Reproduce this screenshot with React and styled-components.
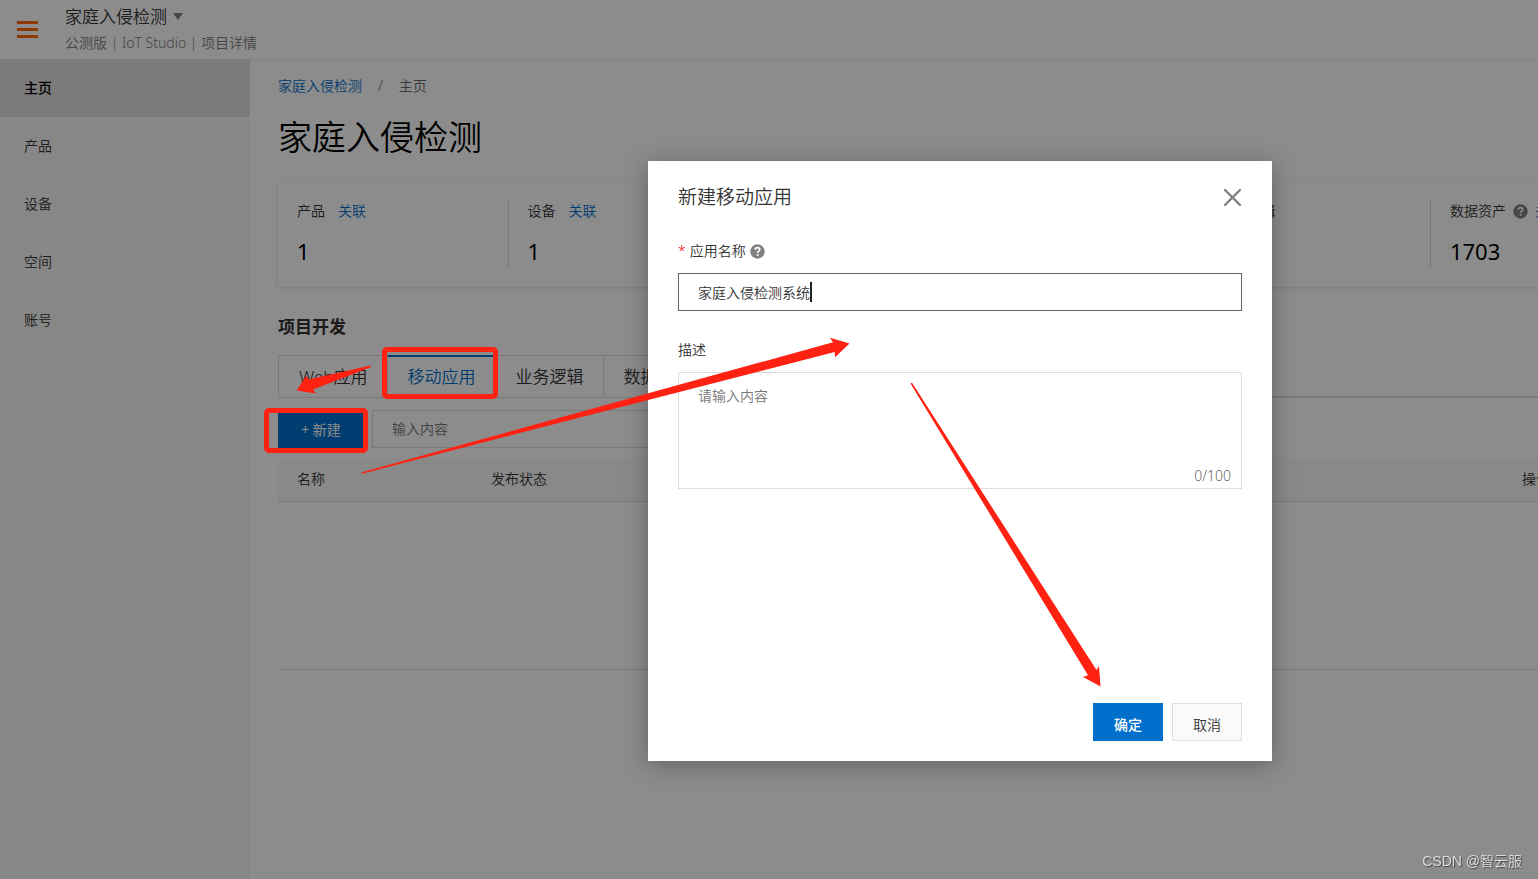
// App.jsx
import React, { useState } from 'react';
import styled, { createGlobalStyle } from 'styled-components';

const GlobalStyle = createGlobalStyle`
  * {
    box-sizing: border-box;
  }

  body {
    margin: 0;
    overflow: hidden;
    background-color: #FFF;
  }

  body, button, input, textarea {
    font-family: "Noto Sans", "Noto Sans CJK SC", sans-serif;
    font-size: 14px;
    font-weight: 350;
    color: #333;
  }
`;

const Page = styled.div`
  position: relative;
  display: flex;
  flex-direction: column;
  min-width: 1920px;
  min-height: 100vh;
`;

const Header = styled.header`
  display: flex;
  align-items: center;
  gap: 27px;
  height: 59px;
  padding-left: 17px;
  box-shadow: 0 1px 4px rgba(0, 0, 0, 0.08);
`;

const MenuButton = styled.button`
  display: flex;
  flex-direction: column;
  gap: 4px;
  width: 21px;
  padding: 0;
  border: none;
  background: none;
  cursor: pointer;
`;

const MenuLine = styled.span`
  height: 3px;
  background-color: #FF6A00;
`;

const ProjectName = styled.button`
  display: flex;
  align-items: center;
  gap: 6px;
  padding: 0;
  border: none;
  background: none;
  font-size: 17px;
  line-height: 26px;
  cursor: pointer;
`;

const ProjectInfo = styled.div`
  line-height: 26px;
  color: #808080;
`;

const Body = styled.div`
  display: flex;
  flex: 1;
`;

const Sidebar = styled.nav`
  display: flex;
  flex-direction: column;
  width: 250px;
  background-color: #F6F6F6;
`;

const SidebarLink = styled.a`
  height: 58px;
  padding-left: 24px;
  line-height: 58px;
  text-decoration: none;
  color: ${(p) => (p.$active ? '#000' : '#333')};
  font-weight: ${(p) => (p.$active ? 500 : 350)};
  background-color: ${(p) => (p.$active ? '#E1E1E1' : 'transparent')};
`;

const Content = styled.main`
  flex: 1;
  padding: 15px 28px 0;
`;

const Breadcrumb = styled.div`
  display: flex;
  gap: 16px;
  line-height: 24px;
  color: #666;
`;

const Link = styled.a`
  color: #0070CC;
  text-decoration: none;
`;

const Title = styled.h1`
  margin: 15px 0 19px;
  font-size: 34px;
  font-weight: 350;
  line-height: 48px;
  color: #000;
`;

const Stats = styled.section`
  display: flex;
  padding: 20px 0;
  box-shadow: 0 1px 4px rgba(0, 0, 0, 0.12);
`;

const Stat = styled.div`
  flex: 1;
  padding-left: 19px;
  border-right: 1px solid ${(p) => (p.$last ? 'transparent' : '#DDD')};
`;

const StatLabel = styled.div`
  display: flex;
  align-items: center;
  gap: ${(p) => (p.$help ? '7px' : '13px')};
  line-height: 22px;
`;

const StatValue = styled.div`
  height: 31px;
  margin-top: 14px;
  font-size: 22px;
  font-weight: 400;
  line-height: 31px;
  color: #000;
`;

const SectionTitle = styled.h2`
  margin: 28px 0 16px;
  font-size: 17px;
  font-weight: 700;
  line-height: 24px;
`;

const Tabs = styled.div`
  display: flex;
  height: 43px;
`;

const Tab = styled.button`
  padding: 0 19px 2px 20px;
  border: 1px solid #DDD;
  border-right-width: 0;
  box-shadow: ${(p) => (p.$active ? 'inset 0 1px #0070CC' : 'none')};
  border-top-color: ${(p) => (p.$active ? '#0070CC' : '#DDD')};
  background: none;
  font-size: 17px;
  color: ${(p) => (p.$active ? '#0070CC' : '#333')};
  cursor: pointer;
`;

const TabsRail = styled.div`
  flex: 1;
  border-left: 1px solid #DDD;
  border-bottom: 2px solid #DDD;
`;

const Toolbar = styled.div`
  display: flex;
  align-items: center;
  gap: 8px;
  margin: 12px 0 10px;
`;

const CreateButton = styled.button`
  width: 86px;
  height: 38px;
  padding: 0;
  border: none;
  background-color: #0070CC;
  color: #FFF;
  font-weight: 400;
  cursor: pointer;
`;

const Search = styled.input`
  width: 320px;
  height: 38px;
  padding: 0 19px 2px;
  border: 1px solid #DDD;
  background-color: #FFF;

  &::placeholder {
    color: #777;
  }
`;

const Table = styled.table`
  width: 100%;
  border-collapse: collapse;
  table-layout: fixed;
`;

const Th = styled.th`
  width: ${(p) => p.$width || 'auto'};
  height: 43px;
  padding: 0 19px 2px;
  border-bottom: 1px solid #E0E0E0;
  background-color: #F9F9F9;
  font-weight: 350;
  text-align: left;
`;

const EmptyCell = styled.td`
  height: 168px;
  border-bottom: 1px solid #DDD;
`;

const Overlay = styled.div`
  position: absolute;
  inset: 0;
  display: flex;
  justify-content: center;
  align-items: flex-start;
  padding-top: 161px;
  background-color: rgba(0, 0, 0, 0.45);
`;

const Dialog = styled.form`
  display: flex;
  flex-direction: column;
  width: 624px;
  min-height: 600px;
  padding: 21px 30px 20px;
  background-color: #FFF;
  box-shadow: 0 4px 24px rgba(0, 0, 0, 0.3);
`;

const DialogHeader = styled.div`
  display: flex;
  align-items: center;
  justify-content: space-between;
`;

const DialogTitle = styled.h2`
  margin: 0;
  font-size: 19px;
  font-weight: 350;
  line-height: 30px;
`;

const CloseButton = styled.button`
  display: flex;
  padding: 0;
  border: none;
  background: none;
  cursor: pointer;
`;

const Field = styled.div`
  position: relative;
  margin-top: 28px;
`;

const Label = styled.label`
  display: flex;
  align-items: center;
  gap: 4px;
  margin-bottom: 11px;
  line-height: 22px;
`;

const Required = styled.span`
  color: #F00;
`;

const Input = styled.input`
  display: block;
  width: 100%;
  height: 38px;
  padding: 0 19px;
  border: 1px solid #666;
  outline: none;
`;

// Cursor del campo, justo después del texto
const Caret = styled.span`
  position: absolute;
  bottom: 9px;
  left: 132px;
  width: 2px;
  height: 20px;
  background-color: #222;
`;

const TextArea = styled.textarea`
  display: block;
  width: 100%;
  height: 117px;
  padding: 12px 19px;
  border: 1px solid #DDD;
  line-height: 22px;
  resize: none;

  &::placeholder {
    color: #777;
  }
`;

const Counter = styled.span`
  position: absolute;
  right: 11px;
  bottom: 3px;
  line-height: 20px;
  color: #666;
`;

const Actions = styled.div`
  display: flex;
  justify-content: flex-end;
  gap: 9px;
  margin-top: auto;
`;

const ActionButton = styled.button`
  width: 70px;
  height: 38px;
  padding: 4px 0 0;
  border: 1px solid ${(p) => (p.$primary ? '#0070CC' : '#DDD')};
  background-color: ${(p) => (p.$primary ? '#0070CC' : '#FAFAFA')};
  color: ${(p) => (p.$primary ? '#FFF' : '#333')};
  font-weight: ${(p) => (p.$primary ? 500 : 350)};
  cursor: pointer;
`;

const Annotations = styled.svg`
  position: absolute;
  top: 0;
  left: 0;
  pointer-events: none;
`;

const Watermark = styled.div`
  position: fixed;
  right: 16px;
  bottom: 7px;
  line-height: 22px;
  font-family: "Liberation Sans", "Noto Sans CJK SC", sans-serif;
  color: #DDD;
  text-shadow: 1px 1px 1px #444;
`;

const HelpIcon = () => (
  <svg width="15" height="15" viewBox="0 0 15 15" aria-hidden="true">
    <circle cx="7.5" cy="7.5" r="7.2" fill="#808080" />
    <path
      d="M5.3 5.8C5.3 4.4 6.2 3.7 7.5 3.7S9.8 4.5 9.8 5.6C9.8 7.1 7.6 7.2 7.6 8.9"
      fill="none"
      stroke="#FFF"
      strokeWidth="1.7"
    />
    <rect x="6.7" y="10" width="1.8" height="1.8" fill="#FFF" />
  </svg>
);

const menu = ['主页', '产品', '设备', '空间', '账号'];
const tabs = ['Web应用', '移动应用', '业务逻辑', '数据分析'];
const stats = [
  { label: '产品', value: '1', link: true },
  { label: '设备', value: '1', link: true },
  { label: '', value: '' },
  { label: '', value: '' },
  { label: '业务逻辑', value: '' },
  { label: '数据资产', value: '1703', link: true, help: true },
  { label: '', value: '' },
];

const App = () => {
  const [name, setName] = useState('家庭入侵检测系统');
  const [description, setDescription] = useState('');

  return (
    <>
      <GlobalStyle />
      <Page>
        <Header>
          <MenuButton type="button" aria-label="菜单">
            <MenuLine />
            <MenuLine />
            <MenuLine />
          </MenuButton>
          <div>
            <ProjectName type="button">
              家庭入侵检测
              <svg width="10" height="7" viewBox="0 0 10 7" aria-hidden="true">
                <path d="M0 0H10L5 7Z" fill="#808080" />
              </svg>
            </ProjectName>
            <ProjectInfo>公测版 | IoT Studio | 项目详情</ProjectInfo>
          </div>
        </Header>
        <Body>
          <Sidebar>
            {menu.map((item, i) => (
              <SidebarLink key={item} href="#" $active={i === 0}>{item}</SidebarLink>
            ))}
          </Sidebar>
          <Content>
            <Breadcrumb>
              <Link href="#">家庭入侵检测</Link>
              <span>/</span>
              <span>主页</span>
            </Breadcrumb>
            <Title>家庭入侵检测</Title>
            <Stats>
              {stats.map((stat, i) => (
                <Stat key={i} $last={i === stats.length - 1}>
                  <StatLabel $help={stat.help}>
                    {stat.label}
                    {stat.help && <HelpIcon />}
                    {stat.link && <Link href="#">关联</Link>}
                  </StatLabel>
                  <StatValue>{stat.value}</StatValue>
                </Stat>
              ))}
            </Stats>
            <SectionTitle>项目开发</SectionTitle>
            <Tabs>
              {tabs.map((tab, i) => (
                <Tab key={tab} type="button" $active={i === 1}>{tab}</Tab>
              ))}
              <TabsRail />
            </Tabs>
            <Toolbar>
              <CreateButton type="button">+ 新建</CreateButton>
              <Search type="text" placeholder="输入内容" aria-label="输入内容" />
            </Toolbar>
            <Table>
              <thead>
                <tr>
                  <Th $width="194px">名称</Th>
                  <Th>发布状态</Th>
                  <Th $width="389px">操作</Th>
                </tr>
              </thead>
              <tbody>
                <tr>
                  <EmptyCell colSpan={3} />
                </tr>
              </tbody>
            </Table>
          </Content>
        </Body>

        <Overlay>
          <Dialog role="dialog" onSubmit={(e) => e.preventDefault()}>
            <DialogHeader>
              <DialogTitle>新建移动应用</DialogTitle>
              <CloseButton type="button" aria-label="关闭">
                <svg width="19" height="19" viewBox="0 0 19 19">
                  <path d="M2 2L17 17M17 2L2 17" stroke="#808080" strokeWidth="2.4" strokeLinecap="round" />
                </svg>
              </CloseButton>
            </DialogHeader>
            <Field>
              <Label htmlFor="name">
                <Required>*</Required>
                应用名称
                <HelpIcon />
              </Label>
              <Input id="name" type="text" value={name} onChange={(e) => setName(e.target.value)} />
              <Caret />
            </Field>
            <Field>
              <Label htmlFor="description">描述</Label>
              <TextArea
                id="description"
                placeholder="请输入内容"
                maxLength={100}
                value={description}
                onChange={(e) => setDescription(e.target.value)}
              />
              <Counter>{description.length}/100</Counter>
            </Field>
            <Actions>
              <ActionButton type="submit" $primary>确定</ActionButton>
              <ActionButton type="button">取消</ActionButton>
            </Actions>
          </Dialog>
        </Overlay>

        {/* Marcas rojas que indican los pasos */}
        <Annotations width="1200" height="720" viewBox="0 0 1200 720" aria-hidden="true">
          <g fill="none" stroke="#FF2212" strokeWidth="5">
            <rect x="384.5" y="349.5" width="111" height="47" rx="2.5" />
            <rect x="266.5" y="410.5" width="99" height="40" rx="2.5" />
          </g>
          <g fill="#FF2212">
            <path d="M370.5 365.5L371 367L313 389.5L316 393.5L296.5 390.5L306.5 375.5L308.5 379.5Z" />
            <path d="M362 472.3L833 342.3L830 337.7L849.5 343.5L835 357.3L834.7 352L362 473.7Z" />
            <path d="M910.5 383.5L912 382.8L1096.5 670L1099 666L1100.5 686.5L1083 677L1088 675.3Z" />
          </g>
        </Annotations>
        <Watermark>CSDN @智云服</Watermark>
      </Page>
    </>
  );
};

export default App;
